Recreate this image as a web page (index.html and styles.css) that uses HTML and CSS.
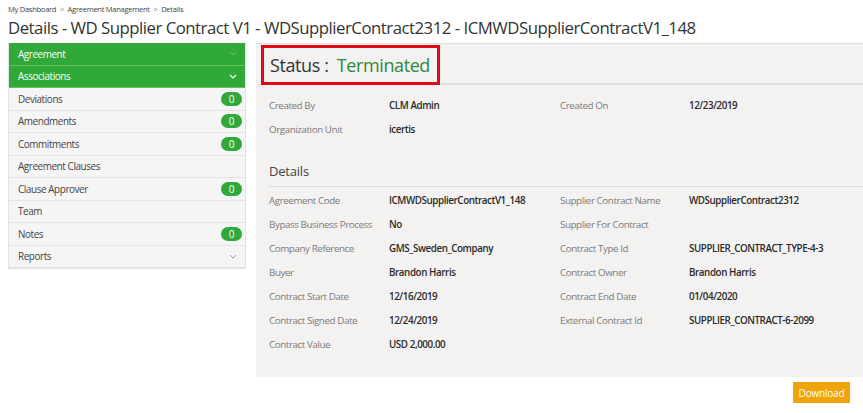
FILE: index.html
```html
<!DOCTYPE html>
<html>
<head>
<meta charset="utf-8">
<link rel="stylesheet" href="styles.css">
</head>
<body>
<div class="crumbs">My Dashboard <span class="sep">&gt;</span> Agreement Management <span class="sep">&gt;</span> Details</div>
<h1 class="title">Details - WD Supplier Contract V1 - WDSupplierContract2312 - ICMWDSupplierContractV1_148</h1>
<div class="layout">
  <nav class="side">
    <div class="item active">Agreement <svg class="chev faint" viewBox="0 0 8 5"><path d="M1 1l3 3 3-3" fill="none" stroke="currentColor" stroke-width="1"/></svg></div>
    <div class="item active">Associations <svg class="chev" viewBox="0 0 8 5"><path d="M1 1l3 3 3-3" fill="none" stroke="currentColor" stroke-width="1.2"/></svg></div>
    <div class="item">Deviations <span class="badge">0</span></div>
    <div class="item">Amendments <span class="badge">0</span></div>
    <div class="item">Commitments <span class="badge">0</span></div>
    <div class="item">Agreement Clauses</div>
    <div class="item">Clause Approver <span class="badge">0</span></div>
    <div class="item">Team</div>
    <div class="item">Notes <span class="badge">0</span></div>
    <div class="item">Reports <svg class="chev gray" viewBox="0 0 8 5"><path d="M1 1l3 3 3-3" fill="none" stroke="currentColor" stroke-width="1"/></svg></div>
  </nav>
  <main class="main">
    <section class="panel">
      <div class="status-row">
        <div class="status">Status : <span class="term">Terminated</span></div>
      </div>
      <div class="grid top">
        <div class="lbl">Created By</div><div class="val">CLM Admin</div>
        <div class="lbl">Created On</div><div class="val">12/23/2019</div>
        <div class="lbl">Organization Unit</div><div class="val">icertis</div>
        <div class="lbl"></div><div class="val"></div>
      </div>
      <h2 class="sub">Details</h2>
      <div class="grid details">
        <div class="lbl">Agreement Code</div><div class="val">ICMWDSupplierContractV1_148</div>
        <div class="lbl">Supplier Contract Name</div><div class="val">WDSupplierContract2312</div>
        <div class="lbl">Bypass Business Process</div><div class="val">No</div>
        <div class="lbl">Supplier For Contract</div><div class="val"></div>
        <div class="lbl">Company Reference</div><div class="val">GMS_Sweden_Company</div>
        <div class="lbl">Contract Type Id</div><div class="val">SUPPLIER_CONTRACT_TYPE-4-3</div>
        <div class="lbl">Buyer</div><div class="val">Brandon Harris</div>
        <div class="lbl">Contract Owner</div><div class="val">Brandon Harris</div>
        <div class="lbl">Contract Start Date</div><div class="val">12/16/2019</div>
        <div class="lbl">Contract End Date</div><div class="val">01/04/2020</div>
        <div class="lbl">Contract Signed Date</div><div class="val">12/24/2019</div>
        <div class="lbl">External Contract Id</div><div class="val">SUPPLIER_CONTRACT-6-2099</div>
        <div class="lbl">Contract Value</div><div class="val">USD 2,000.00</div>
        <div class="lbl"></div><div class="val"></div>
      </div>
    </section>
    <div class="actions"><button class="btn">Download</button></div>
  </main>
</div>
</body>
</html>
```
FILE: styles.css
```css
* { box-sizing: border-box; }
html, body { margin: 0; padding: 0; background: #fff; }
body {
  font-family: "Open Sans", "Noto Sans", sans-serif;
  color: #333;
  padding: 0 0 0 8px;
  overflow: hidden;
}
.crumbs {
  font-size: 7.6px;
  letter-spacing: -0.3px;
  color: #444;
  padding-top: 4px;
  height: 14px;
  line-height: 10px;
}
.crumbs .sep { color: #777; margin: 0 2px; }
.title {
  font-weight: 400;
  font-size: 16.8px;
  letter-spacing: -0.5px;
  margin: 0;
  height: 29px;
  line-height: 28px;
  color: #333;
  white-space: nowrap;
}
.layout {
  display: flex;
  gap: 10px;
  align-items: flex-start;
}
.side {
  width: 238px;
  flex: none;
  border: 1px solid #e2e2e2;
  border-top: none;
  background: #f5f5f5;
}
.item {
  height: 22.5px;
  display: flex;
  align-items: center;
  justify-content: space-between;
  padding: 0 3px 0 9px;
  font-size: 9.9px;
  letter-spacing: -0.4px;
  color: #444;
  border-bottom: 1px solid #e4e4e4;
}
.item.active {
  background: #30a93a;
  color: #fff;
  border-bottom: 1px solid #5fc064;
}
.chev { width: 8px; height: 5px; margin-right: 5px; color: #fff; }
.chev.faint { color: #6cc573; }
.chev.gray { color: #999; }
.badge {
  background: #30a93a;
  color: #fff;
  border-radius: 8px;
  width: 21px;
  height: 14px;
  font-size: 10px;
  letter-spacing: 0;
  line-height: 14px;
  text-align: center;
}
.main {
  flex: 1;
  display: flex;
  flex-direction: column;
}
.panel {
  background: #f3f2f1;
  border-top: 1px solid #dedede;
  height: 334px;
  padding: 0 0 0 5px;
}
.status-row {
  border-bottom: 2px solid #e2e1e0;
  height: 41px;
  padding-top: 1px;
}
.status {
  display: inline-block;
  border: 3px solid #e30613;
  font-size: 18px;
  letter-spacing: -0.4px;
  line-height: 34px;
  height: 40px;
  padding: 0 0 0 6px;
  color: #333;
  width: 179px;
  white-space: nowrap;
}
.term { color: #2f8a3a; margin-left: 4px; }
.grid {
  display: grid;
  grid-template-columns: 120px 171px 129px 1fr;
  padding-left: 8px;
  font-size: 9.8px;
  letter-spacing: -0.42px;
  grid-auto-rows: 24px;
  align-items: center;
}
.grid.top { padding-top: 8px; }
.lbl { color: #7a7a7a; white-space: nowrap; }
.val { color: #2a2a2a; font-weight: 600; white-space: nowrap; }
.sub {
  font-weight: 400;
  font-size: 13px;
  letter-spacing: -0.2px;
  color: #444;
  margin: 20px 0 0 8px;
  height: 26px;
  line-height: 20px;
  border-bottom: 1px solid #dcdcdc;
}
.grid.details { padding-top: 1px; }
.actions {
  display: flex;
  justify-content: flex-end;
  padding: 5px 13px 0 0;
}
.btn {
  background: #f0a30a;
  color: #fff;
  border: none;
  font-family: inherit;
  font-size: 10px;
  letter-spacing: -0.2px;
  height: 21px;
  width: 57px;
  padding: 0;
}
```
